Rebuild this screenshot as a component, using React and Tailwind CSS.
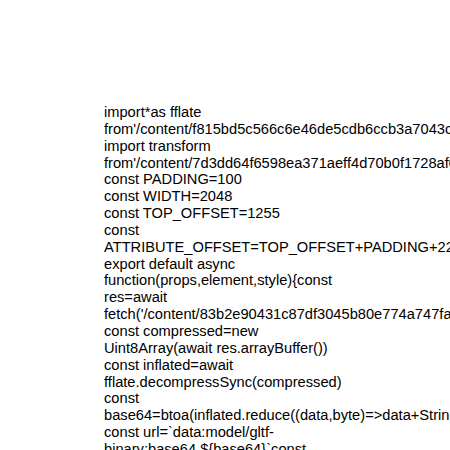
import React from 'react';

const lines = [
  "import*as fflate from'/content/f815bd5c566c6e46de5cdb6ccb3a7043c63deeba61f4234baea84b602e0d4a6di0'",
  "import transform from'/content/7d3dd64f6598ea371aeff4d70b0f1728af0b4db1c1bc5d2a0f4e0a5e7d2f1b3ci0'",
  "const PADDING=100",
  "const WIDTH=2048",
  "const TOP_OFFSET=1255",
  "const ATTRIBUTE_OFFSET=TOP_OFFSET+PADDING+220",
  "export default async function(props,element,style){const res=await fetch('/content/83b2e90431c87df3045b80e774a747fa2b1e3d0c6c9f0e9d2b4a8f1e0c3d5a7bi0')",
  "const compressed=new Uint8Array(await res.arrayBuffer())",
  "const inflated=await fflate.decompressSync(compressed)",
  "const base64=btoa(inflated.reduce((data,byte)=>data+String.fromCharCode(byte),''))",
  "const url=`data:model/gltf-binary;base64,${base64}`const modelViewer=document.createElement('model-viewer')",
  "modelViewer.setAttribute('src',url)",
];

export default function App() {
  return (
    <div className="w-[450px] h-[450px] overflow-hidden bg-white">
      <div
        className="ml-[104px] pt-[104px] w-[250px] text-[14.67px] leading-[16.85px] text-black"
        style={{ fontFamily: '"Liberation Sans", Arial, sans-serif' }}
      >
        {lines.map((l, i) => (
          <div key={i}>{l}</div>
        ))}
      </div>
    </div>
  );
}
